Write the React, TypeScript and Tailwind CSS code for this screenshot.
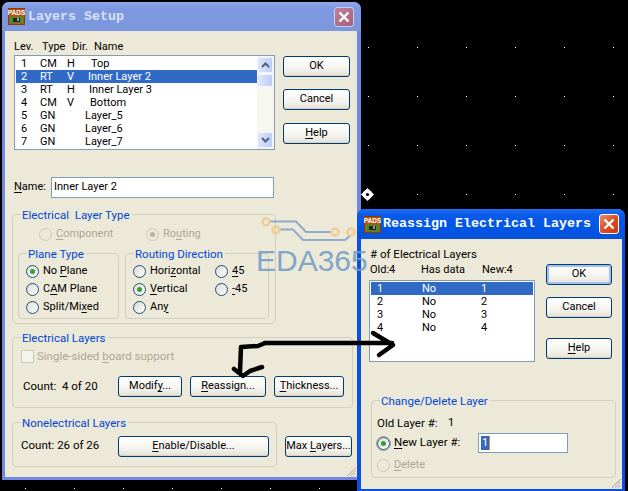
import React from "react";

const Mn = ({ children }: { children: React.ReactNode }) => <span className="underline underline-offset-2">{children}</span>;

function Btn({ w, h = 21, def, children, className = "" }: { w: number; h?: number; def?: boolean; children: React.ReactNode; className?: string }) {
  return (
    <div
      style={{ width: w, height: h }}
      className={`shrink-0 flex items-center justify-center rounded-[3px] border border-[#003c74] text-black bg-[linear-gradient(180deg,#ffffff,#f4f3ee_60%,#e3e1d6)] ${def ? "shadow-[inset_0_0_0_2px_#a4bff0]" : "shadow-[inset_0_-1px_0_#d6d0c5]"} ${className}`}
    >
      <span className="whitespace-nowrap">{children}</span>
    </div>
  );
}

function Radio({ checked, disabled, focus, children }: { checked?: boolean; disabled?: boolean; focus?: boolean; children: React.ReactNode }) {
  return (
    <div className={`flex items-center h-[18px] gap-[4px] whitespace-nowrap ${disabled ? "text-[#aca899]" : "text-black"}`}>
      <span className={`relative shrink-0 w-[13px] h-[13px] rounded-full border flex items-center justify-center ${disabled ? "border-[#cac8bb] bg-[#ece9d8]" : "border-[#1c5180] bg-[linear-gradient(135deg,#dcdad0,#ffffff)]"} ${focus ? "outline outline-1 outline-[#9a9a90]" : ""}`}>
        {checked && <span className={`w-[5px] h-[5px] rounded-full ${disabled ? "bg-[#b5b3a6]" : "bg-[#2fa32f]"}`} />}
      </span>
      <span>{children}</span>
    </div>
  );
}

function Group({ title, legendLeft = 8, className = "", children }: { title: string; legendLeft?: number; className?: string; children: React.ReactNode }) {
  return (
    <div className={`relative shrink-0 rounded-[4px] border border-[#d0d0bf] ${className}`}>
      <span style={{ left: legendLeft }} className="absolute top-[-7px] bg-[#ece9d8] pl-[1px] pr-[2px] leading-[14px] text-[11.5px] text-[#0046d5] whitespace-pre">{title}</span>
      {children}
    </div>
  );
}

const PadsIcon = () => (
  <svg width="17" height="17" viewBox="0 0 17 17" className="shrink-0">
    <rect x="0.5" y="0.5" width="16" height="16" fill="#b5540f" stroke="#8a3c08" />
    <text x="8.5" y="7" textAnchor="middle" fontSize="6.5" fontWeight="700" fill="#fff" fontFamily="Liberation Sans, sans-serif">PADS</text>
    <rect x="2" y="9" width="13" height="6" fill="#2f9a2f" />
    <rect x="5" y="10" width="7" height="4" fill="#222" />
    <rect x="9" y="10" width="2" height="3" fill="#9a9a9a" />
  </svg>
);

function CloseBtn({ active }: { active?: boolean }) {
  return (
    <div className={`shrink-0 w-[20px] h-[20px] rounded-[3px] border flex items-center justify-center ${active ? "border-white bg-[linear-gradient(135deg,#ec8a68,#dd4a20_55%,#c93a10)]" : "border-[#c6cdf0] bg-[linear-gradient(135deg,#bd8398,#a75f78)]"}`}>
      <svg width="12" height="12" viewBox="0 0 12 12"><path d="M1.5 1.5 10.5 10.5M10.5 1.5 1.5 10.5" stroke="#fff" strokeWidth="2.4" /></svg>
    </div>
  );
}

const Grip = ({ className }: { className: string }) => (
  <svg width="11" height="11" viewBox="0 0 11 11" className={className}>
    <path d="M10 1 1 10M10 4 4 10M10 7 7 10" stroke="#b5b2a3" strokeWidth="1.2" />
    <path d="M10.5 2 2 10.5M10.5 5 5 10.5M10.5 8 8 10.5" stroke="#fff" strokeWidth="0.8" />
  </svg>
);

const Chevron = ({ up }: { up?: boolean }) => (
  <svg width="9" height="6" viewBox="0 0 9 6"><path d={up ? "M1 5 4.5 1.5 8 5" : "M1 1 4.5 4.5 8 1"} fill="none" stroke="#4d6185" strokeWidth="2" /></svg>
);

const scrollBtn = "shrink-0 w-[16px] flex items-center justify-center rounded-[2px] border border-[#f1f4fd] bg-[linear-gradient(90deg,#dfe7fb,#bccdf8)]";

const layerRows: [string, string, string, string, number][] = [
  ["1", "CM", "H", "Top", 91],
  ["2", "RT", "V", "Inner Layer 2", 88],
  ["3", "RT", "H", "Inner Layer 3", 89],
  ["4", "CM", "V", "Bottom", 90],
  ["5", "GN", "", "Layer_5", 85],
  ["6", "GN", "", "Layer_6", 85],
  ["7", "GN", "", "Layer_7", 85],
];

function LayersSetup() {
  return (
    <div className="absolute left-[2px] top-[2px] w-[359px] h-[478px] flex flex-col rounded-t-[7px] bg-[#7288de] px-[3px] pr-[4px] pb-[3px]">
      <div className="shrink-0 h-[29px] -mx-[3px] -mr-[4px] rounded-t-[7px] flex items-center pl-[6px] pr-[7px] bg-[linear-gradient(180deg,#8fa6ea,#7d98e0_25%,#7b97dd)]">
        <PadsIcon />
        <span className="ml-[3px] flex-1 font-bold text-[13.33px] text-[#d8e2f8] [font-family:'Liberation_Mono',monospace]">Layers Setup</span>
        <CloseBtn />
      </div>
      <div className="flex-1 min-h-0 bg-[#ece9d8] flex flex-col pl-[7px]">
        <div className="flex h-[13px] mt-[9px] ml-[2px] leading-[14px] text-black">
          <span className="w-[28px]">Lev.</span>
          <span className="w-[30px]">Type</span>
          <span className="w-[22px]">Dir.</span>
          <span>Name</span>
        </div>
        <div className="flex mt-[2px] ml-[2px]">
          <div className="w-[261px] h-[95px] shrink-0 border border-[#7f9db9] bg-white flex">
            <div className="flex-1 pt-[1px] pl-[1px]">
              {layerRows.map((r, i) => (
                <div key={r[0]} className={`relative flex h-[13px] leading-[14px] ${i === 1 ? "bg-[#316ac5] text-white" : "text-black"}`}>
                  <span className="ml-[5px] w-[19px]">{r[0]}</span>
                  <span className="w-[27px]">{r[1]}</span>
                  <span className="w-[20px]">{r[2]}</span>
                  <span style={{ marginLeft: r[4] - 87 }}>{r[3]}</span>
                </div>
              ))}
            </div>
            <div className="shrink-0 w-[17px] bg-[#f7f6ef] flex flex-col items-start py-[1px]">
              <div className={`${scrollBtn} h-[16px]`}><Chevron up /></div>
              <div className={`${scrollBtn} h-[13px] mt-[1px]`} />
              <div className="flex-1" />
              <div className={`${scrollBtn} h-[16px]`}><Chevron /></div>
            </div>
          </div>
          <div className="ml-[8px] mt-[1px] flex flex-col">
            <Btn w={67}>OK</Btn>
            <Btn w={67} className="mt-[12px]">Cancel</Btn>
            <Btn w={67} className="mt-[13px]"><Mn>H</Mn>elp</Btn>
          </div>
        </div>
        <div className="flex items-center mt-[27px] ml-[2px] h-[21px]">
          <span className="w-[37px] text-black"><Mn>N</Mn>ame:</span>
          <div className="w-[223px] h-[21px] border border-[#7f9db9] bg-white flex items-center pl-[2px] text-black">Inner Layer 2</div>
        </div>

        <Group title="Electrical  Layer Type" className="w-[264px] h-[110px] mt-[16px]">
          <div className="flex h-[18px] mt-[10px] pl-[26px]">
            <div className="w-[107px]"><Radio disabled><Mn>C</Mn>omponent</Radio></div>
            <Radio disabled checked>Ro<Mn>u</Mn>ting</Radio>
          </div>
          <div className="flex gap-[6px] mt-[10px] ml-[5px]">
            <Group title="Plane Type" className="w-[101px] h-[66px] pl-[7px] pt-[8px]">
              <Radio checked>No <Mn>P</Mn>lane</Radio>
              <Radio>C<Mn>A</Mn>M Plane</Radio>
              <Radio>Split/Mi<Mn>x</Mn>ed</Radio>
            </Group>
            <Group title="Routing Direction" className="w-[144px] h-[66px] pl-[7px] pt-[8px]">
              <div className="grid grid-cols-[82px_auto]">
                <Radio>Hori<Mn>z</Mn>ontal</Radio>
                <Radio><Mn>4</Mn>5</Radio>
                <Radio checked><Mn>V</Mn>ertical</Radio>
                <Radio><Mn>-</Mn>45</Radio>
                <Radio>An<Mn>y</Mn></Radio>
              </div>
            </Group>
          </div>
        </Group>

        <Group title="Electrical Layers" className="w-[341px] h-[71px] mt-[13px]">
          <div className="flex items-center h-[13px] mt-[12px] ml-[8px] text-[#aca899]">
            <span className="w-[13px] h-[13px] border border-[#cac8bb] bg-[#f5f4ec]" />
            <span className="ml-[3px] text-[11.5px]">Single-sided <Mn>b</Mn>oard support</span>
          </div>
          <div className="flex items-center mt-[13px] ml-[10px] text-black">
            <span className="w-[95px] whitespace-pre text-[11.5px]">Count:  4 of 20</span>
            <Btn w={64}>Modif<Mn>y</Mn>...</Btn>
            <Btn w={76} className="ml-[8px]"><Mn>R</Mn>eassign...</Btn>
            <Btn w={70} className="ml-[8px]"><Mn>T</Mn>hickness...</Btn>
          </div>
        </Group>

        <div className="flex mt-[14px]">
          <Group title="Nonelectrical Layers" className="w-[265px] h-[45px] flex items-center pl-[8px] pt-[3px] text-black">
            <span className="w-[97px] text-[11.5px]">Count: 26 of 26</span>
            <Btn w={151}><Mn>E</Mn>nable/Disable...</Btn>
          </Group>
          <Btn w={67} className="ml-[8px] mt-[14px]">Max <Mn>L</Mn>ayers...</Btn>
        </div>
        <Grip className="self-end mt-auto" />
      </div>
    </div>
  );
}

const reassignRows = [["1", "No", "1"], ["2", "No", "2"], ["3", "No", "3"], ["4", "No", "4"]];

function Reassign() {
  return (
    <div className="absolute left-[357px] top-[209px] w-[268px] h-[282px] flex flex-col rounded-t-[7px] bg-[#0a50e6] pl-[4px] pr-[3px] pb-[2px]">
      <div className="shrink-0 h-[30px] -ml-[4px] -mr-[3px] rounded-t-[7px] flex items-center pl-[7px] pr-[6px] bg-[linear-gradient(180deg,#1f70f5,#0a5ae8_20%,#0055e5_70%,#0a50d8)]">
        <PadsIcon />
        <span className="ml-[2px] flex-1 font-bold text-[13.33px] text-white [font-family:'Liberation_Mono',monospace] whitespace-nowrap">Reassign Electrical Layers</span>
        <CloseBtn active />
      </div>
      <div className="flex-1 min-h-0 bg-[#ece9d8] flex flex-col text-black pl-[8px]">
        <div className="flex">
          <div className="w-[166px] shrink-0">
            <div className="ml-[1px] mt-[8px] h-[14px] leading-[15px] text-[11.5px]"># of Electrical Layers</div>
            <div className="ml-[1px] mt-[1px] h-[14px] leading-[15px] flex">
              <span className="w-[51px]">Old:4</span>
              <span className="w-[61px]">Has data</span>
              <span>New:4</span>
            </div>
            <div className="mt-[4px] w-[166px] h-[82px] border border-[#7f9db9] bg-white p-[1px]">
              {reassignRows.map((r, i) => (
                <div key={r[0]} className={`flex h-[13px] leading-[14px] ${i === 0 ? "bg-[#316ac5] text-white" : "text-black"}`}>
                  <span className="ml-[6px] w-[45px]">{r[0]}</span>
                  <span className="w-[59px]">{r[1]}</span>
                  <span>{r[2]}</span>
                </div>
              ))}
            </div>
          </div>
          <div className="ml-[11px] mt-[25px] flex flex-col">
            <Btn w={66} def>OK</Btn>
            <Btn w={66} className="mt-[12px]">Cancel</Btn>
            <Btn w={66} className="mt-[20px]"><Mn>H</Mn>elp</Btn>
          </div>
        </div>
        <Group title="Change/Delete Layer" className="w-[245px] h-[78px] mt-[38px] ml-[2px] pl-[5px]">
          <div className="flex h-[14px] leading-[14px] mt-[15px]">
            <span className="w-[71px] text-[11.5px]">Old Layer #:</span>
            <span>1</span>
          </div>
          <div className="flex items-center mt-[3px] h-[20px]">
            <div className="w-[101px]"><Radio checked focus><span className="text-[11.5px]"><Mn>N</Mn>ew Layer #:</span></Radio></div>
            <div className="w-[90px] h-[20px] border border-[#7f9db9] bg-white flex items-center pl-[2px]">
              <span className="w-[9px] h-[14px] bg-[#316ac5] text-white text-center leading-[14px] border-r border-r-[#d98a1a]">1</span>
            </div>
          </div>
          <div className="mt-[3px]"><Radio disabled><Mn>D</Mn>elete</Radio></div>
        </Group>
        <Grip className="self-end mt-auto" />
      </div>
    </div>
  );
}

export default function App() {
  return (
    <div className="relative w-[628px] h-[491px] overflow-hidden bg-black text-[11px] [font-family:'Roboto',sans-serif]">
      <svg className="absolute inset-0" width="628" height="491">
        <defs>
          <pattern id="dots" width="49" height="49" patternUnits="userSpaceOnUse">
            <rect x="25" y="47" width="1" height="1" fill="#fff" />
          </pattern>
        </defs>
        <rect width="628" height="491" fill="url(#dots)" />
        <g transform="translate(367.5 194.5)">
          <path d="M0 -6.5 L6.5 0 L0 6.5 L-6.5 0Z" fill="#fff" />
          <circle r="4.7" fill="#fff" />
          <circle r="1.6" fill="#000" />
        </g>
      </svg>
      <LayersSetup />
      <Reassign />
      <svg className="absolute inset-0 pointer-events-none" width="628" height="491">
        <g opacity="0.85" fill="none">
          <path d="M270 221.5H296L306 232H331M280 229.5H293L303 240H345L351 235" stroke="#7da2c6" strokeWidth="2" />
          <g stroke="#f2c88a" strokeWidth="2.5">
            <circle cx="266" cy="222" r="3.5" />
            <circle cx="276" cy="230" r="3.5" />
            <circle cx="335" cy="232" r="3.5" />
            <circle cx="351" cy="232" r="3.5" />
          </g>
        </g>
        <g fill="none" stroke="#000" strokeLinecap="round" strokeLinejoin="round" strokeWidth="4.5">
          <path d="M265 343H392M373 333 393 345 379 355" />
          <path d="M265 343 258 346 241 347 240 372M234 369 243 376 250 371 262 367" />
        </g>
      </svg>
      <span className="absolute left-[256px] top-[241px] text-[30px] leading-[40px] text-[#6f9bc6] opacity-85 [font-family:'Liberation_Sans',sans-serif] pointer-events-none">EDA365</span>
    </div>
  );
}
